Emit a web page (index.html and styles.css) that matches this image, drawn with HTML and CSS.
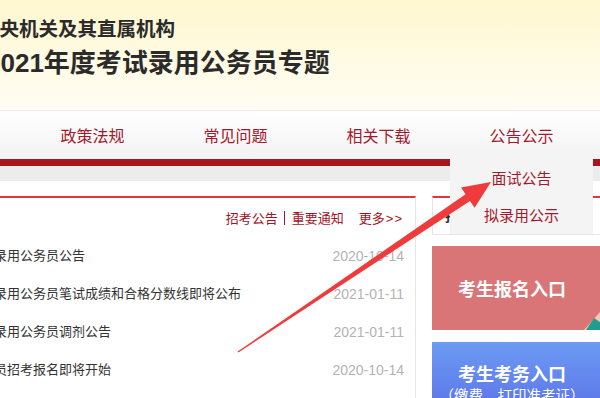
FILE: index.html
```html
<!DOCTYPE html>
<html>
<head>
    <meta charset="utf-8">
    <title>2021年度考试录用公务员专题</title>
    <link rel="stylesheet" href="styles.css">
</head>
<body>
<div class="top">
    <div class="brand">
        <div class="brand-sub">中央机关及其直属机构</div>
        <div class="brand-title">2021年度考试录用公务员专题</div>
    </div>
</div>
<div class="nav">
    <ul class="menu">
        <li><a href="#">政策法规</a></li>
        <li><a href="#">常见问题</a></li>
        <li><a href="#">相关下载</a></li>
        <li class="has-drop">
            <a href="#">公告公示</a>
            <div class="drop">
                <a href="#">面试公告</a>
                <a href="#">拟录用公示</a>
            </div>
        </li>
    </ul>
</div>
<div class="strip"></div>
<div class="main">
    <div class="news">
        <div class="news-head">
            <span class="tabs">招考公告<span class="sep"></span>重要通知</span>
            <a class="more" href="#">更多<span class="arr">&gt;&gt;</span></a>
        </div>
        <ul class="news-list">
            <li><a href="#">中央机关及其直属机构考试录用公务员公告</a><span class="date">2020-10-14</span></li>
            <li><a href="#">中央机关及其直属机构考试录用公务员笔试成绩和合格分数线即将公布</a><span class="date">2021-01-11</span></li>
            <li><a href="#">中央机关及其直属机构考试录用公务员调剂公告</a><span class="date">2021-01-11</span></li>
            <li><a href="#">中央机关及其直属机构公务员招考报名即将开始</a><span class="date">2020-10-14</span></li>
        </ul>
    </div>
    <div class="side">
        <div class="side-box">报名须知</div>
        <a class="entry entry-sign" href="#">
            <span class="entry-title">考生报名入口</span>
            <svg class="entry-deco" width="20" height="20" viewBox="0 0 20 20">
                <polygon points="20,2 20,20 4,20" fill="#f3c9b6"/>
                <polygon points="14,8 20,12 20,20 6,20" fill="#1f9e8e"/>
            </svg>
        </a>
        <a class="entry entry-exam" href="#">
            <span class="entry-title">考生考务入口</span>
            <span class="entry-sub">（缴费、打印准考证）</span>
        </a>
    </div>
</div>

<!-- 标注箭头 -->
<svg class="mark" width="600" height="398" viewBox="0 0 600 398">
    <polygon points="237.6,351.6 465.6,194.3 461,187.4 491,182 474.6,207.8 470,200.9 238.4,352.4" fill="#ef3b3b"/>
</svg>
</body>
</html>
```

FILE: styles.css
```css
html, body {
    margin: 0;
    padding: 0;
    width: 600px;
    height: 398px;
    overflow: hidden;
    background-color: #fff;
    font-family: "Liberation Sans", "Noto Sans CJK SC", sans-serif;
}

a {
    text-decoration: none;
    color: inherit;
}

ul {
    list-style: none;
    margin: 0;
    padding: 0;
}

.top {
    height: 110px;
    background: linear-gradient(#fff7cf, #fffdf4);
    border-bottom: 1px solid #f0ecec;
}

.brand {
    padding-top: 17px;
    color: #2b2b2b;
    font-weight: bold;
}

.brand-sub {
    font-size: 19.5px;
    line-height: 24px;
    margin-left: -20px;
}

.brand-title {
    font-size: 26px;
    line-height: 32px;
    margin-top: 6px;
    margin-left: -14px;
}

.nav {
    height: 48px;
    background: linear-gradient(#ffffff, #f3f3f3);
    border-bottom: 7px solid #a8161d;
}

.menu {
    display: flex;
    padding-left: 21px;
    height: 48px;
}

.menu li {
    width: 143px;
    text-align: center;
    position: relative;
}

.menu li > a {
    display: block;
    font-size: 16px;
    line-height: 52px;
    color: #a3182d;
}

.drop {
    position: absolute;
    top: 46px;
    left: 0;
    width: 143px;
    padding-top: 3px;
    background-color: #f4f4f4;
    z-index: 2;
}

.drop a {
    display: block;
    font-size: 15px;
    line-height: 37px;
    color: #a3182d;
}

.strip {
    height: 15px;
    background-color: #ececec;
}

.main {
    display: flex;
    margin-top: 15px;
}

.news {
    flex: none;
    width: 586px;
    margin-left: -170px;
    padding-left: 8px;
    box-sizing: border-box;
    border-top: 2px solid #e1353b;
    border-right: 1px solid #e6e6e6;
}

.news-head {
    display: flex;
    justify-content: flex-end;
    align-items: center;
    height: 39px;
    padding-right: 12px;
    font-size: 13px;
    color: #9e1428;
}

.tabs {
    display: flex;
    align-items: center;
}

.sep {
    display: inline-block;
    width: 1px;
    height: 14px;
    margin: 0 7px 0 6px;
    background-color: #9e1428;
}

.more {
    margin-left: 15px;
}

.arr {
    letter-spacing: 1px;
    margin-left: 1px;
}

.news-list li {
    display: flex;
    justify-content: space-between;
    height: 38px;
    line-height: 38px;
    padding-right: 11px;
    font-size: 13px;
    color: #333;
}

.date {
    font-size: 14px;
    color: #b3b3b3;
}

.side {
    flex: none;
    width: 190px;
    margin-left: 16px;
}

.side-box {
    height: 36px;
    line-height: 36px;
    padding-left: 12px;
    border-top: 2px solid #e1353b;
    border-left: 1px solid #e6e6e6;
    border-bottom: 1px solid #e6e6e6;
    font-size: 14px;
    font-weight: bold;
    color: #333;
}

.entry {
    display: flex;
    flex-direction: column;
    align-items: center;
    padding-right: 30px;
    color: #fff;
    position: relative;
}

.entry-title {
    font-size: 18px;
    font-weight: bold;
    line-height: 22px;
}

.entry-sign {
    height: 84px;
    margin-top: 11px;
    padding-top: 33px;
    box-sizing: border-box;
    background-color: #d97577;
}

.entry-deco {
    position: absolute;
    left: 148px;
    top: 64px;
}

.entry-exam {
    height: 80px;
    margin-top: 12px;
    padding-top: 22px;
    box-sizing: border-box;
    background: linear-gradient(#6c9bf4, #5a6de6);
}

.entry-sub {
    font-size: 14.5px;
    line-height: 18px;
    margin-top: 1px;
}

.mark {
    position: absolute;
    left: 0;
    top: 0;
    pointer-events: none;
    z-index: 5;
}
```
